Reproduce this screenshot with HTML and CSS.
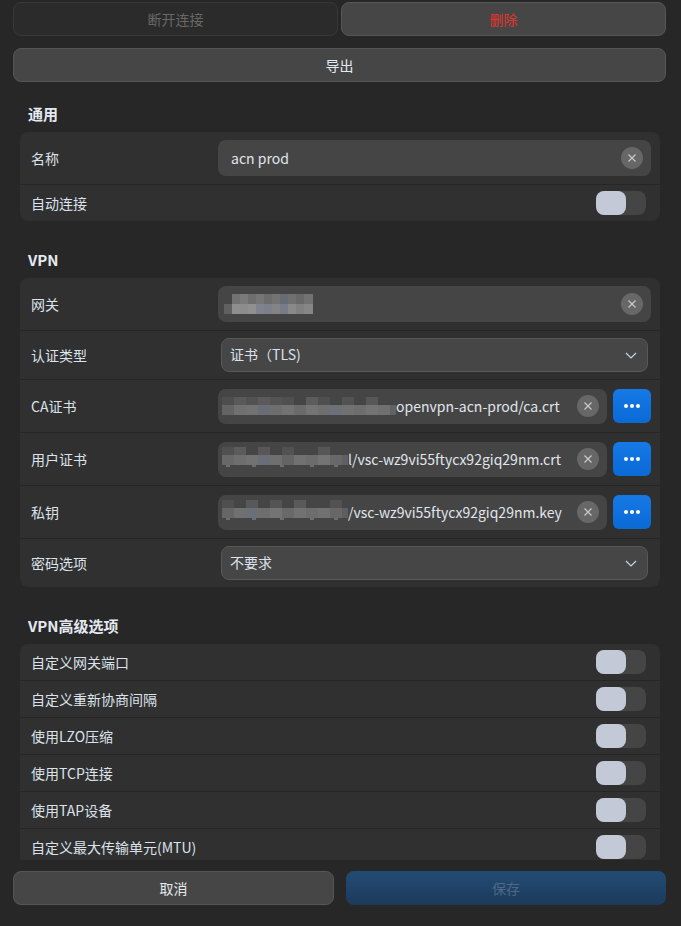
FILE: index.html
```html
<!DOCTYPE html>
<html lang="zh-CN">
<head>
  <meta charset="UTF-8">
  <meta name="viewport" content="width=device-width, initial-scale=1.0">
  <link rel="stylesheet" href="styles.css">
</head>
<body>
  <div class="top-actions">
    <button class="btn btn-disabled">断开连接</button>
    <button class="btn btn-danger">删除</button>
  </div>
  <button class="btn btn-export">导出</button>

  <div class="content">
    <h2 class="section-title first">通用</h2>
    <div class="card">
      <div class="row row-tall">
        <span class="label">名称</span>
        <div class="entry">
          <span class="entry-text">acn prod</span>
          <span class="clear"><svg width="10" height="10" viewBox="0 0 10 10"><path d="M1.5 1.5 8.5 8.5M8.5 1.5 1.5 8.5" stroke="#c9c9c9" stroke-width="1.2"/></svg></span>
        </div>
      </div>
      <div class="row">
        <span class="label">自动连接</span>
        <span class="toggle"><span class="knob"></span></span>
      </div>
    </div>

    <h2 class="section-title">VPN</h2>
    <div class="card">
      <div class="row row-tall">
        <span class="label">网关</span>
        <div class="entry entry-blur">
          <span class="entry-text">
            <svg class="mosaic" width="90" height="20" viewBox="0 0 90 20">
              <rect x="8" y="0" width="8" height="10" fill="#727272"/>
              <rect x="16" y="0" width="8" height="10" fill="#7a7a7a"/>
              <rect x="24" y="0" width="8" height="10" fill="#6e6e6e"/>
              <rect x="32" y="0" width="8" height="10" fill="#767676"/>
              <rect x="40" y="0" width="8" height="10" fill="#6c6c6c"/>
              <rect x="48" y="0" width="8" height="10" fill="#737373"/>
              <rect x="56" y="0" width="8" height="10" fill="#666c74"/>
              <rect x="64" y="0" width="8" height="10" fill="#707070"/>
              <rect x="72" y="0" width="8" height="10" fill="#686868"/>
              <rect x="80" y="0" width="9" height="10" fill="#727272"/>
              <rect x="0" y="10" width="8" height="10" fill="#606060"/>
              <rect x="8" y="10" width="8" height="10" fill="#8e8e8e"/>
              <rect x="16" y="10" width="8" height="10" fill="#8c8c8c"/>
              <rect x="24" y="10" width="8" height="10" fill="#909090"/>
              <rect x="32" y="10" width="8" height="10" fill="#7e838e"/>
              <rect x="40" y="10" width="8" height="10" fill="#7b808b"/>
              <rect x="48" y="10" width="8" height="10" fill="#848484"/>
              <rect x="56" y="10" width="8" height="10" fill="#777c88"/>
              <rect x="64" y="10" width="8" height="10" fill="#898989"/>
              <rect x="72" y="10" width="8" height="10" fill="#808080"/>
              <rect x="80" y="10" width="9" height="10" fill="#868686"/>
            </svg>
          </span>
          <span class="clear"><svg width="10" height="10" viewBox="0 0 10 10"><path d="M1.5 1.5 8.5 8.5M8.5 1.5 1.5 8.5" stroke="#c9c9c9" stroke-width="1.2"/></svg></span>
        </div>
      </div>
      <div class="row row-mid">
        <span class="label">认证类型</span>
        <div class="dropdown">
          <span class="dropdown-text">证书（TLS)</span>
          <svg width="12" height="7" viewBox="0 0 12 7"><path d="M1 1 6 6 11 1" fill="none" stroke="#cfd4dc" stroke-width="1.2"/></svg>
        </div>
      </div>
      <div class="row row-tall">
        <span class="label">CA证书</span>
        <div class="entry entry-file">
          <span class="entry-text">
            <svg class="mosaic" width="174" height="18" viewBox="0 0 174 18">
              <rect x="0" y="0" width="12" height="8" fill="#4e4e4e"/>
              <rect x="12" y="0" width="12" height="8" fill="#595959"/>
              <rect x="24" y="0" width="12" height="8" fill="#525252"/>
              <rect x="36" y="0" width="12" height="8" fill="#5a5a5a"/>
              <rect x="48" y="0" width="12" height="8" fill="#545454"/>
              <rect x="60" y="0" width="12" height="8" fill="#505050"/>
              <rect x="84" y="0" width="12" height="8" fill="#5c5c5c"/>
              <rect x="96" y="0" width="12" height="8" fill="#4f4f4f"/>
              <rect x="120" y="0" width="12" height="8" fill="#535353"/>
              <rect x="144" y="0" width="12" height="8" fill="#575757"/>
              <rect x="0" y="8" width="12" height="10" fill="#646464"/>
              <rect x="12" y="8" width="12" height="10" fill="#707070"/>
              <rect x="24" y="8" width="12" height="10" fill="#727272"/>
              <rect x="36" y="8" width="12" height="10" fill="#696e76"/>
              <rect x="48" y="8" width="12" height="10" fill="#6e6e6e"/>
              <rect x="60" y="8" width="12" height="10" fill="#737373"/>
              <rect x="72" y="8" width="12" height="10" fill="#6b6b6b"/>
              <rect x="84" y="8" width="12" height="10" fill="#747474"/>
              <rect x="96" y="8" width="12" height="10" fill="#6f6f6f"/>
              <rect x="108" y="8" width="12" height="10" fill="#6c7179"/>
              <rect x="120" y="8" width="12" height="10" fill="#717171"/>
              <rect x="132" y="8" width="12" height="10" fill="#6e6e6e"/>
              <rect x="144" y="8" width="12" height="10" fill="#747474"/>
              <rect x="156" y="8" width="12" height="10" fill="#707070"/>
              <rect x="168" y="8" width="6" height="10" fill="#626262"/>
            </svg><span>openvpn-acn-prod/ca.crt</span>
          </span>
          <span class="clear"><svg width="10" height="10" viewBox="0 0 10 10"><path d="M1.5 1.5 8.5 8.5M8.5 1.5 1.5 8.5" stroke="#c9c9c9" stroke-width="1.2"/></svg></span>
        </div>
        <button class="browse"><span></span><span></span><span></span></button>
      </div>
      <div class="row row-tall">
        <span class="label">用户证书</span>
        <div class="entry entry-file">
          <span class="entry-text">
            <svg class="mosaic" width="126" height="24" viewBox="0 0 126 24">
              <rect x="0" y="0" width="12" height="8" fill="#505050"/>
              <rect x="12" y="0" width="12" height="8" fill="#5b5b5b"/>
              <rect x="36" y="0" width="12" height="8" fill="#575757"/>
              <rect x="60" y="0" width="12" height="8" fill="#525252"/>
              <rect x="96" y="0" width="12" height="8" fill="#565656"/>
              <rect x="0" y="8" width="12" height="10" fill="#686868"/>
              <rect x="12" y="8" width="12" height="10" fill="#6e6e6e"/>
              <rect x="24" y="8" width="12" height="10" fill="#727272"/>
              <rect x="36" y="8" width="12" height="10" fill="#6a6f77"/>
              <rect x="48" y="8" width="12" height="10" fill="#6f6f6f"/>
              <rect x="60" y="8" width="12" height="10" fill="#646464"/>
              <rect x="72" y="8" width="12" height="10" fill="#717171"/>
              <rect x="84" y="8" width="12" height="10" fill="#6c6c6c"/>
              <rect x="96" y="8" width="12" height="10" fill="#747474"/>
              <rect x="108" y="8" width="12" height="10" fill="#686868"/>
              <rect x="120" y="8" width="6" height="10" fill="#606060"/>
              <rect x="4" y="18" width="4" height="2" fill="#6e6e6e"/>
              <rect x="30" y="18" width="4" height="2" fill="#6e6e6e"/>
              <rect x="58" y="18" width="4" height="2" fill="#6e6e6e"/>
              <rect x="88" y="18" width="4" height="2" fill="#6e6e6e"/>
              <rect x="112" y="18" width="4" height="2" fill="#6e6e6e"/>
            </svg><span>l/vsc-wz9vi55ftycx92giq29nm.crt</span>
          </span>
          <span class="clear"><svg width="10" height="10" viewBox="0 0 10 10"><path d="M1.5 1.5 8.5 8.5M8.5 1.5 1.5 8.5" stroke="#c9c9c9" stroke-width="1.2"/></svg></span>
        </div>
        <button class="browse"><span></span><span></span><span></span></button>
      </div>
      <div class="row row-tall">
        <span class="label">私钥</span>
        <div class="entry entry-file">
          <span class="entry-text">
            <svg class="mosaic" width="126" height="24" viewBox="0 0 126 24">
              <rect x="0" y="0" width="12" height="8" fill="#4f4f4f"/>
              <rect x="24" y="0" width="12" height="8" fill="#585858"/>
              <rect x="48" y="0" width="12" height="8" fill="#545454"/>
              <rect x="72" y="0" width="12" height="8" fill="#5a5a5a"/>
              <rect x="108" y="0" width="12" height="8" fill="#525252"/>
              <rect x="0" y="8" width="12" height="10" fill="#666666"/>
              <rect x="12" y="8" width="12" height="10" fill="#707070"/>
              <rect x="24" y="8" width="12" height="10" fill="#6b7078"/>
              <rect x="36" y="8" width="12" height="10" fill="#6e6e6e"/>
              <rect x="48" y="8" width="12" height="10" fill="#747474"/>
              <rect x="60" y="8" width="12" height="10" fill="#696969"/>
              <rect x="72" y="8" width="12" height="10" fill="#727272"/>
              <rect x="84" y="8" width="12" height="10" fill="#6d6d6d"/>
              <rect x="96" y="8" width="12" height="10" fill="#717171"/>
              <rect x="108" y="8" width="12" height="10" fill="#676767"/>
              <rect x="120" y="8" width="6" height="10" fill="#5e5e5e"/>
              <rect x="4" y="18" width="4" height="2" fill="#6e6e6e"/>
              <rect x="30" y="18" width="4" height="2" fill="#6e6e6e"/>
              <rect x="58" y="18" width="4" height="2" fill="#6e6e6e"/>
              <rect x="88" y="18" width="4" height="2" fill="#6e6e6e"/>
              <rect x="112" y="18" width="4" height="2" fill="#6e6e6e"/>
            </svg><span>/vsc-wz9vi55ftycx92giq29nm.key</span>
          </span>
          <span class="clear"><svg width="10" height="10" viewBox="0 0 10 10"><path d="M1.5 1.5 8.5 8.5M8.5 1.5 1.5 8.5" stroke="#c9c9c9" stroke-width="1.2"/></svg></span>
        </div>
        <button class="browse"><span></span><span></span><span></span></button>
      </div>
      <div class="row row-mid">
        <span class="label">密码选项</span>
        <div class="dropdown">
          <span class="dropdown-text">不要求</span>
          <svg width="12" height="7" viewBox="0 0 12 7"><path d="M1 1 6 6 11 1" fill="none" stroke="#cfd4dc" stroke-width="1.2"/></svg>
        </div>
      </div>
    </div>

    <h2 class="section-title">VPN高级选项</h2>
    <div class="card">
      <div class="row"><span class="label">自定义网关端口</span><span class="toggle"><span class="knob"></span></span></div>
      <div class="row"><span class="label">自定义重新协商间隔</span><span class="toggle"><span class="knob"></span></span></div>
      <div class="row"><span class="label">使用LZO压缩</span><span class="toggle"><span class="knob"></span></span></div>
      <div class="row"><span class="label">使用TCP连接</span><span class="toggle"><span class="knob"></span></span></div>
      <div class="row"><span class="label">使用TAP设备</span><span class="toggle"><span class="knob"></span></span></div>
      <div class="row"><span class="label">自定义最大传输单元(MTU)</span><span class="toggle"><span class="knob"></span></span></div>
    </div>
  </div>

  <div class="footer">
    <button class="btn">取消</button>
    <button class="btn btn-primary">保存</button>
  </div>
</body>
</html>
```

FILE: styles.css
```css
* {
  box-sizing: border-box;
}
body {
  margin: 0;
  height: 926px;
  overflow: hidden;
  background-color: #272727;
  color: #dce2eb;
  font-family: "Noto Sans CJK SC", "Noto Sans", sans-serif;
  font-size: 14px;
}
.btn {
  display: block;
  height: 34px;
  border: 1px solid #565656;
  border-radius: 8px;
  background-color: #464646;
  color: #e4e9f0;
  font-family: inherit;
  font-size: 14px;
  padding: 0;
}
.top-actions {
  display: grid;
  grid-template-columns: 1fr 1fr;
  gap: 3px;
  padding: 2px 15px 0 13px;
}
.btn-disabled {
  background-color: #2b2b2b;
  border-color: #383838;
  color: #686868;
}
.btn-danger {
  color: #e3342b;
}
.btn-export {
  width: 653px;
  margin: 12px 0 0 13px;
}
.content {
  height: 778px;
  overflow: hidden;
  padding: 0 21px 0 20px;
}
.section-title {
  margin: 29px 0 8px 8px;
  font-size: 15px;
  line-height: 20px;
  font-weight: bold;
  color: #e4e9f1;
}
.section-title.first {
  margin-top: 22px;
}
.card {
  background-color: #303030;
  border-radius: 8px;
}
.row {
  display: flex;
  align-items: center;
  height: 36px;
  padding: 0 9px 0 11px;
  border-top: 1px solid #262626;
}
.row:first-child {
  border-top: none;
  height: 36px;
}
.card .row + .row {
  height: 37px;
}
.card .row-tall {
  height: 52px;
}
.card .row + .row-tall {
  height: 53px;
}
.card .row + .row-mid {
  height: 49px;
}
.label {
  flex: none;
  width: 187px;
  white-space: nowrap;
}
.entry {
  flex: 1;
  display: flex;
  align-items: center;
  height: 36px;
  padding: 0 8px 0 13px;
  background-color: #454545;
  border-radius: 8px;
  min-width: 0;
}
.entry-blur {
  padding-left: 6px;
}
.entry-file {
  height: 35px;
  padding-left: 4px;
}
.entry-text {
  flex: 1;
  display: flex;
  align-items: center;
  white-space: nowrap;
  overflow: hidden;
  color: #e0e5ec;
}
.mosaic {
  display: block;
  flex: none;
}
.clear {
  flex: none;
  display: flex;
  align-items: center;
  justify-content: center;
  width: 22px;
  height: 22px;
  border-radius: 50%;
  background-color: #676767;
}
.browse {
  flex: none;
  display: flex;
  align-items: center;
  justify-content: center;
  gap: 2px;
  width: 38px;
  height: 34px;
  margin-left: 6px;
  padding: 0;
  border: none;
  border-radius: 6px;
  background: linear-gradient(#1679e6, #0a6ad6);
}
.browse span {
  width: 4px;
  height: 4px;
  border-radius: 50%;
  background-color: #ffffff;
}
.dropdown {
  flex: 1;
  display: flex;
  align-items: center;
  justify-content: space-between;
  height: 34px;
  margin: 0 3px;
  padding: 0 10px 0 8px;
  background-color: #464646;
  border: 1px solid #585858;
  border-radius: 8px;
}
.dropdown-text {
  line-height: 20px;
  margin-top: -2px;
}
.toggle {
  flex: none;
  display: block;
  width: 50px;
  height: 24px;
  margin-left: auto;
  margin-right: 5px;
  border-radius: 8px;
  background-color: #454545;
}
.knob {
  display: block;
  width: 30px;
  height: 24px;
  border-radius: 8px;
  background-color: #c3c9d6;
}
.footer {
  display: grid;
  grid-template-columns: 321px 320px;
  gap: 12px;
  padding: 11px 15px 0 13px;
}
.btn-primary {
  border: none;
  background: linear-gradient(#234c74, #1c3a5c);
  color: #4f6984;
}
```
